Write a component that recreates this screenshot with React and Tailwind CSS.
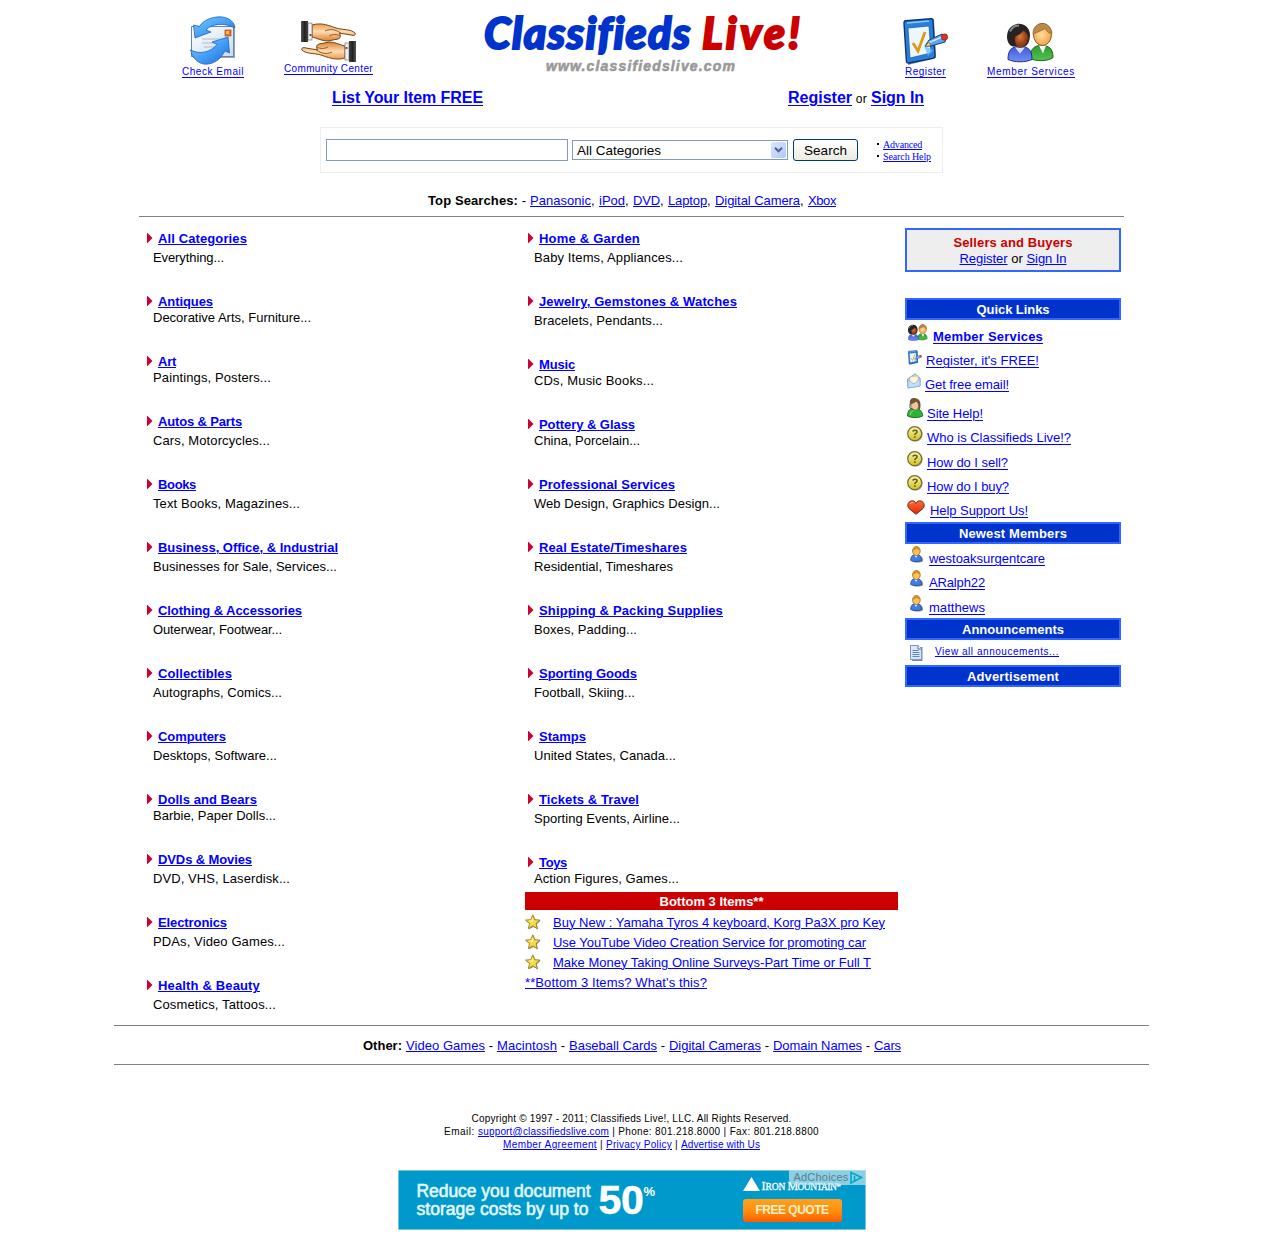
import { useLayoutEffect, useRef } from "react";

// Text set to a given width by adjusting its letter spacing.
function Fit({ w, children, flat, className = "" }) {
  const ref = useRef(null);
  useLayoutEffect(() => {
    const el = ref.current;
    el.style.letterSpacing = "0px";
    const natural = el.getBoundingClientRect().width;
    el.style.letterSpacing = `${(w - natural) / el.textContent.length}px`;
  }, [w, children]);
  return (
    <span ref={ref} className={`inline-block shrink-0 whitespace-pre ${flat ? "" : "-mb-px pt-px"} ${className}`}>
      {children}
    </span>
  );
}

function Link({ w, children, flat, className = "" }) {
  return (
    <a href="#" className="flex text-[#0000ff]">
      <Fit w={w} flat={flat} className={`underline decoration-1 ${className || "underline-offset-1"}`}>{children}</Fit>
    </a>
  );
}

const left = [
  ["All Categories", 89, "Everything...", 71, 0],
  ["Antiques", 55, "Decorative Arts, Furniture...", 158, 1],
  ["Art", 18, "Paintings, Posters...", 118, 1],
  ["Autos & Parts", 84, "Cars, Motorcycles...", 117, 0],
  ["Books", 38, "Text Books, Magazines...", 147, 0],
  ["Business, Office, & Industrial", 180, "Businesses for Sale, Services...", 184, 0],
  ["Clothing & Accessories", 144, "Outerwear, Footwear...", 129, 0],
  ["Collectibles", 74, "Autographs, Comics...", 129, 0],
  ["Computers", 68, "Desktops, Software...", 124, 0],
  ["Dolls and Bears", 99, "Barbie, Paper Dolls...", 123, 1],
  ["DVDs & Movies", 94, "DVD, VHS, Laserdisk...", 137, 0],
  ["Electronics", 69, "PDAs, Video Games...", 132, 0],
  ["Health & Beauty", 102, "Cosmetics, Tattoos...", 123, 0],
];

const right = [
  ["Home & Garden", 101, "Baby Items, Appliances...", 149, 0],
  ["Jewelry, Gemstones & Watches", 198, "Bracelets, Pendants...", 129, 0],
  ["Music", 36, "CDs, Music Books...", 120, 1],
  ["Pottery & Glass", 96, "China, Porcelain...", 106, 1],
  ["Professional Services", 136, "Web Design, Graphics Design...", 186, 0],
  ["Real Estate/Timeshares", 148, "Residential, Timeshares", 139, 0],
  ["Shipping & Packing Supplies", 184, "Boxes, Padding...", 103, 0],
  ["Sporting Goods", 98, "Football, Skiing...", 101, 0],
  ["Stamps", 47, "United States, Canada...", 142, 0],
  ["Tickets & Travel", 100, "Sporting Events, Airline...", 146, 0],
  ["Toys", 28, "Action Figures, Games...", 145, 1],
];

function Category({ item: [title, tw, sub, sw, tight] }) {
  return (
    <div className="pb-7 last:pb-0">
      <div className="flex h-4 items-center">
        <svg width="6" height="10" viewBox="0 0 6 10" className="mr-[5px]">
          <path d="M0 0h.5l5 5-5 5H0z" fill="#cc0033" />
        </svg>
        <Link w={tw} className="font-bold underline-offset-1">{title}</Link>
      </div>
      <div className={`flex h-4 pl-1.5 ${tight ? "" : "mt-[3px]"}`}>
        <Fit w={sw}>{sub}</Fit>
      </div>
    </div>
  );
}

function EmailIcon() {
  return (
    <svg width="46" height="50" viewBox="0 0 46 50">
      <defs>
        <linearGradient id="arrowBlue" x1="0" y1="0" x2="1" y2="1">
          <stop offset="0" stopColor="#7cc4ff" />
          <stop offset=".45" stopColor="#4ba6fb" />
          <stop offset="1" stopColor="#1a6cdc" />
        </linearGradient>
        <linearGradient id="paper" x1="0" y1="0" x2="1" y2="1">
          <stop offset="0" stopColor="#fff" />
          <stop offset="1" stopColor="#c9dcf4" />
        </linearGradient>
      </defs>
      <path d="M3 12h42v30H3z" fill="#555" opacity=".55" />
      <path d="M1.500 10.500h42v30h-42z" fill="url(#paper)" stroke="#6385b5" />
      <rect x="35" y="14" width="6" height="6" fill="#f07020" stroke="#a84a20" strokeWidth=".7" />
      <path d="M36 15h3v3h-3z" fill="#ffb050" />
      <path d="M12 23h18M12 27h16M14 31h12" stroke="#b3b8c2" strokeWidth="1.200" />
      <path d="M45 12C44 3 34 0 27 1 18 2 12 6 9.500 10.500L3.500 9 5 22 21 16l-5-2c5-6 18-8 29-2z" fill="url(#arrowBlue)" stroke="#2163b4" strokeWidth=".8" />
      <path d="M.5 34C4 46 12 49 18 48c8-1 13-6 17-13l4.500 2L38 21 22 26l5 2.500C21 36 10 39 .5 34z" fill="url(#arrowBlue)" stroke="#2163b4" strokeWidth=".8" />
    </svg>
  );
}

function Hand() {
  return (
    <g>
      <path d="M11 4c10-3 18 1 24 3 7 2 15 1 19 5 1 2-1 3-4 2l-12-2c2 2 2 5-1 6l-10 2c-7 0-11-3-16-4z" fill="url(#skin)" stroke="#7a4318" strokeWidth="1" />
      <path d="M24 10c6-3 12-1 17 3M28 15c4-2 8-2 11 0" fill="none" stroke="#9c5a24" strokeWidth="1" />
      <rect x="7" y="2" width="4" height="17" fill="#f2f2f2" stroke="#777" strokeWidth=".7" />
      <rect x="0" y="0" width="7" height="21" fill="url(#sleeve)" />
      <rect x="8.500" y="13" width="2" height="2" fill="#555" />
    </g>
  );
}

function HandsIcon() {
  return (
    <svg width="56" height="42" viewBox="0 0 56 42">
      <defs>
        <linearGradient id="skin" x1="0" y1="0" x2="0" y2="1">
          <stop offset="0" stopColor="#e89a50" />
          <stop offset=".45" stopColor="#ffdcb0" />
          <stop offset="1" stopColor="#d68136" />
        </linearGradient>
        <linearGradient id="sleeve">
          <stop offset="0" stopColor="#555" />
          <stop offset=".5" stopColor="#222" />
          <stop offset="1" stopColor="#444" />
        </linearGradient>
      </defs>
      <Hand />
      <g transform="rotate(180 27.500 20.500)"><Hand /></g>
    </svg>
  );
}

function RegisterIcon({ w, h }) {
  return (
    <svg width={w} height={h} viewBox="0 0 46 47" className="shrink-0">
      <path d="M4 5l27-4 2 39L5 47z" fill="#444" opacity=".6" />
      <path d="M1 5Q1 3 3 2.800L28 .7q2-.2 2 2L32 38q0 2-2 2.400L6 45q-2.500.5-2.600-2z" fill="#2a7fdd" stroke="#0a3474" strokeWidth="1.400" />
      <path d="M4 5l22-2" stroke="#8ccaff" strokeWidth="1.500" />
      <path d="M5 10l21-2 2 27-21 5z" fill="#eef6ff" stroke="#0e55ad" strokeWidth=".7" />
      <path d="M10 25l5 8 7-19" fill="none" stroke="#dc9c12" strokeWidth="2.800" />
      <path d="M21 28l4 10 6-6z" fill="#58bbf5" opacity=".7" />
      <path d="M22 28l4-6 13-6 4 4-1 4-14 4z" fill="#58a5ee" stroke="#17407c" />
      <path d="M25 25l14-6" stroke="#c6e6ff" strokeWidth="1.500" />
      <path d="M22 28l4-4 2 4z" fill="#f4cf82" stroke="#333" strokeWidth=".5" />
      <circle cx="41.500" cy="19" r="3.200" fill="#d43424" stroke="#8a1c18" strokeWidth=".6" />
    </svg>
  );
}

function PeopleIcon({ w, h }) {
  return (
    <svg width={w} height={h} viewBox="0 0 48 40" className="shrink-0">
      <defs>
        <radialGradient id="brownFace" cx=".4" cy=".35"><stop offset="0" stopColor="#d87a40" /><stop offset="1" stopColor="#8f3c12" /></radialGradient>
        <radialGradient id="lightFace" cx=".45" cy=".5"><stop offset="0" stopColor="#ffdc9c" /><stop offset="1" stopColor="#f0a850" /></radialGradient>
        <linearGradient id="blueCoat" x1="0" y1="0" x2="0" y2="1"><stop offset="0" stopColor="#4058d8" /><stop offset="1" stopColor="#7190f8" /></linearGradient>
        <linearGradient id="greenCoat" x1="0" y1="0" x2="0" y2="1"><stop offset="0" stopColor="#2c9a30" /><stop offset="1" stopColor="#52c44e" /></linearGradient>
      </defs>
      <path d="M23 36c0-9 4-13 11-13 8 0 12 3 12 12-5 4-17 4-23 1z" fill="url(#greenCoat)" stroke="#17641a" />
      <path d="M32 23l4 8 3-8z" fill="#fff" />
      <ellipse cx="35.500" cy="12" rx="9" ry="11" fill="url(#lightFace)" stroke="#8c5a1c" />
      <path d="M26 12C25-2 44-3 45 11c-3 0-5-2-7-5-4 3-8 3-12 6z" fill="#bb8a48" stroke="#7c5a2c" strokeWidth=".6" />
      <path d="M1 37c0-9 3-13 12-13s12 4 12 13c-6 3-18 3-24 0z" fill="url(#blueCoat)" stroke="#1c2f91" />
      <path d="M8 25l5 6 5-6z" fill="#d4e0ff" />
      <path d="M0 14C0-2 22-3 23 12c0 8-3 11-5 12H6c-4-1-6-5-6-10z" fill="#242424" />
      <path d="M8 14c4-2 6-3 8-6 4 2 6 5 5 9-1 5-4 8-8 8-4 0-6-5-5-11z" fill="url(#brownFace)" stroke="#512109" strokeWidth=".6" />
      <path d="M3 9C5 5 8 3 12 3" stroke="#888" strokeWidth="2" fill="none" />
    </svg>
  );
}

function MailSmall() {
  return (
    <svg width="14" height="16" viewBox="0 0 14 16">
      <path d="M.5 6L8 .8l5 4.200v8L1 15z" fill="#b9d9f4" stroke="#7aa6d0" />
      <path d="M3 4l8-1v7l-8 1z" fill="#fff6dc" stroke="#e5b570" strokeWidth=".7" />
      <path d="M1 7l6 4 6-5v7L1 15z" fill="#c3e0f8" stroke="#82b0d8" strokeWidth=".7" />
    </svg>
  );
}

function HelpPerson() {
  return (
    <svg width="16" height="20" viewBox="0 0 16 20">
      <path d="M.6 18c0-6 3-8 7-8s8 3 8 8c-4 2-11 2-15 0z" fill="#2fb335" stroke="#14751b" />
      <path d="M3 17c1-3 2-4 4-5" stroke="#91e889" fill="none" />
      <ellipse cx="8" cy="6.500" rx="4" ry="5.500" fill="#f2c595" stroke="#916039" strokeWidth=".6" />
      <path d="M3 7C2 0 6-.5 9 .5c5 1 5 6 4 11l-2-1c1-3 0-6-2-7-2 2-4 2-6 3.500z" fill="#715339" />
      <path d="M3 6v4l4 2" stroke="#555" fill="none" />
    </svg>
  );
}

function Question() {
  return (
    <svg width="16" height="16" viewBox="0 0 16 16">
      <defs><linearGradient id="gold" x1="0" y1="0" x2="0" y2="1"><stop offset="0" stopColor="#f8f4b8" /><stop offset="1" stopColor="#d3bd24" /></linearGradient></defs>
      <circle cx="8.400" cy="8.500" r="7.300" fill="#aaa" />
      <circle cx="7.700" cy="7.700" r="7" fill="url(#gold)" stroke="#77701d" strokeWidth="1.200" />
      <path d="M5.700 5.500C6 3.800 10 3.600 10 5.800 10 7.500 7.800 7.300 7.800 9" stroke="#665f0e" strokeWidth="1.500" fill="none" />
      <path d="M7 10.300h1.600v1.500H7z" fill="#665f0e" />
    </svg>
  );
}

function Heart() {
  return (
    <svg width="18" height="15" viewBox="0 0 18 15">
      <defs><linearGradient id="heartRed" x1="0" y1="0" x2="0" y2="1"><stop offset="0" stopColor="#ff6a38" /><stop offset="1" stopColor="#dc2a05" /></linearGradient></defs>
      <path d="M9 14.300L2 8.500C-1 5 2 .6 5.500.8 7.500 1 8.500 2 9 3.500 9.500 2 10.500 1 12.500.8 16 .6 19 5 16 8.500z" fill="url(#heartRed)" stroke="#7a2a14" />
      <path d="M3 4c.5-1.200 1.500-1.700 3-1.500" stroke="#ffc4a0" fill="none" />
    </svg>
  );
}

function UserIcon() {
  return (
    <svg width="13" height="17" viewBox="0 0 13 17">
      <path d="M2 15C2 10 4 9 7 9s6 1 6 6c-2 2-9 2-11 0z" fill="#888" />
      <path d="M.7 14.500C.7 10 3 8.500 6 8.500s5.500 1.500 5.500 6c-3 1.500-8 1.500-10.800 0z" fill="#3f7be8" stroke="#2149a0" strokeWidth=".8" />
      <path d="M4.500 9L6 12l1.500-3z" fill="#fff" />
      <ellipse cx="6.400" cy="5" rx="3.800" ry="4.500" fill="#fbc35c" stroke="#9a641c" strokeWidth=".8" />
      <path d="M2.600 5C2-.5 10-1.200 10.300 4 8 4 7 3 6 2.700 5.500 4 4 4 2.600 5z" fill="#d58d22" />
    </svg>
  );
}

function DocIcon() {
  return (
    <svg width="14" height="16" viewBox="0 0 14 16">
      <path d="M2 2h10.500v14H2z" fill="#889" />
      <path d="M.5.500h7.500l3.500 3.500v10.500H.5z" fill="#d9e6fb" stroke="#7f97c4" />
      <path d="M8 .5V4h3.500" fill="#fff" stroke="#4f70ab" />
      <path d="M2.500 5.500h6M2.500 7.500h7M2.500 9.500h7M2.500 11.500h7" stroke="#5f86cc" />
    </svg>
  );
}

function Star() {
  return (
    <svg width="16" height="16" viewBox="0 0 16 16" className="mr-3">
      <path d="M8.500 1.500l2 4.800 5 .5-3.700 3.600 1.200 5.200-4.500-2.700L4 15.500l1-5.200L1.300 7l5-.5z" fill="#8b9aa5" />
      <path d="M7.800.8l2 4.900 5.200.4-4 3.500 1.300 5-4.500-2.700-4.500 2.700 1.300-5-4-3.500 5.200-.4z" fill="#f8dc45" stroke="#987a1e" strokeWidth=".9" />
      <path d="M7.800 3l.2 5-5-1.200 3.500-.3z" fill="#fff6ae" />
    </svg>
  );
}

function Bar({ w, children }) {
  return (
    <div className="flex h-[22px] items-center justify-center border-2 border-[#3366ff] bg-[#0033cc] font-bold text-white">
      <Fit w={w}>{children}</Fit>
    </div>
  );
}

function SideRow({ h, pad, iconBox, icon, mb = "mb-[3px]", w, bold, children }) {
  return (
    <div className={`flex items-end ${h} ${pad}`}>
      <div className={`shrink-0 ${iconBox} ${mb}`}>{icon}</div>
      <Link w={w} className={bold ? "font-bold underline-offset-2" : "underline-offset-2"}>{children}</Link>
    </div>
  );
}

export default function App() {
  return (
    <div className="h-[1257px] w-[1263px] overflow-hidden bg-white font-['Liberation_Sans',Arial,sans-serif] text-[13px] leading-4 text-black">
      <header className="flex h-[82px] items-start pl-[182px] text-[10px] leading-3">
        <div className="flex w-[62px] flex-col items-center pt-4">
          <EmailIcon />
          <Link flat w={62} className="underline-offset-2">Check Email</Link>
        </div>
        <div className="ml-10 flex w-[89px] flex-col items-center pt-[21px]">
          <HandsIcon />
          <Link flat w={89} className="underline-offset-2">Community Center</Link>
        </div>
        <div className="ml-[111px] flex w-[319px] flex-col pt-2.5">
          <div className="flex justify-between font-['Lato',sans-serif] text-[43px] leading-[46px] font-black italic">
            <Fit flat w={207} className="text-[#0033cc] [-webkit-text-stroke:2px_#0033cc]">Classifieds</Fit>
            <Fit flat w={101} className="text-[#cc0000] [-webkit-text-stroke:2px_#cc0000]">Live!</Fit>
          </div>
          <div className="flex pl-[62px] text-[14px] leading-[18px] font-bold text-[#999] italic [-webkit-text-stroke:0.600px_#999]">
            <Fit w={190}>www.classifiedslive.com</Fit>
          </div>
        </div>
        <div className="ml-[100px] flex w-[45px] flex-col items-center pt-[18px]">
          <RegisterIcon w={46} h={47} />
          <div className="mt-px"><Link flat w={41} className="underline-offset-2">Register</Link></div>
        </div>
        <div className="ml-[39px] flex w-[88px] flex-col items-center pt-[22px]">
          <PeopleIcon w={48} h={41} />
          <div className="mt-[3px]"><Link flat w={88} className="underline-offset-2">Member Services</Link></div>
        </div>
      </header>

      <div className="flex h-[45px] items-start pt-[5px] pl-[332px] text-base leading-5">
        <Link w={151} className="font-bold underline-offset-2">List Your Item FREE</Link>
        <div className="ml-[305px] flex items-baseline">
          <Link w={64} className="font-bold underline-offset-2">Register</Link>
          <Fit w={19} className="text-xs"> or </Fit>
          <Link w={53} className="font-bold underline-offset-2">Sign In</Link>
        </div>
      </div>

      <div className="ml-[320px] flex h-[46px] w-[623px] items-center border border-[#eeeeee] pl-[5px]">
        <input className="h-[22px] w-[242px] border border-[#7f9db9] bg-white px-1 outline-none" />
        <div className="ml-1 flex h-5 w-[216px] items-center justify-between border border-[#7f9db9] pr-px pl-1">
          <Fit w={84} className="text-[13.500px]">All Categories</Fit>
          <div className="flex h-4 w-[15px] items-center justify-center rounded-[2px] bg-gradient-to-br from-[#dbe6ff] to-[#b0c8f6]">
            <svg width="9" height="6" viewBox="0 0 9 6"><path d="M1 .8l3.500 3.500L8 .8" fill="none" stroke="#4d6185" strokeWidth="2" /></svg>
          </div>
        </div>
        <button className="ml-[5px] flex h-[22px] w-[65px] items-center justify-center rounded-[3px] border border-[#003c74] bg-gradient-to-b from-white to-[#ebebe2]">
          <Fit w={43} className="text-[13.500px]">Search</Fit>
        </button>
        <div className="ml-[19px] flex flex-col font-['Liberation_Serif',serif] text-[10px] leading-3">
          <div className="flex items-center gap-1"><span className="h-0.5 w-0.5 bg-black" /><Link w={39}>Advanced</Link></div>
          <div className="flex items-center gap-1"><span className="h-0.5 w-0.5 bg-black" /><Link w={48}>Search Help</Link></div>
        </div>
      </div>

      <div className="mt-[19px] ml-[139px] flex h-[25px] w-[985px] border-b border-[#808080] pl-[289px]">
        <Fit w={90} className="font-bold">Top Searches:</Fit>
        <Fit w={12}> - </Fit>
        <Link w={61}>Panasonic</Link><Fit w={8}>, </Fit>
        <Link w={26}>iPod</Link><Fit w={8}>, </Fit>
        <Link w={27}>DVD</Link><Fit w={8}>, </Fit>
        <Link w={39}>Laptop</Link><Fit w={8}>, </Fit>
        <Link w={85}>Digital Camera</Link><Fit w={8}>, </Fit>
        <Link w={28}>Xbox</Link>
      </div>

      <main className="flex h-[808px] pt-[11px] pl-[147px]">
        <section className="w-[378px] pt-0.5">
          {left.map((item) => <Category key={item[0]} item={item} />)}
        </section>
        <section className="w-[373px] pt-0.5">
          <div className="pl-[3px]">
            {right.map((item) => <Category key={item[0]} item={item} />)}
          </div>
          <div className="mt-1.5 mb-0.5 flex h-[18px] items-center justify-center bg-[#cc0000] font-bold text-white">
            <Fit w={104}>Bottom 3 Items**</Fit>
          </div>
          <div className="flex h-5 items-center"><Star /><Link w={332}>Buy New : Yamaha Tyros 4 keyboard, Korg Pa3X pro Key</Link></div>
          <div className="flex h-5 items-center"><Star /><Link w={313}>Use YouTube Video Creation Service for promoting car</Link></div>
          <div className="flex h-5 items-center"><Star /><Link w={318}>Make Money Taking Online Surveys-Part Time or Full T</Link></div>
          <div className="flex h-5 items-center"><Link w={182}>**Bottom 3 Items? What's this?</Link></div>
        </section>

        <aside className="ml-[7px] w-[216px]">
          <div className="mb-[26px] flex h-11 flex-col items-center justify-center border-2 border-[#3366ff] bg-[#eeeeee]">
            <Fit w={119} className="font-bold text-[#cc0000]">Sellers and Buyers</Fit>
            <div className="flex"><Link w={48}>Register</Link><Fit w={19}> or </Fit><Link w={40}>Sign In</Link></div>
          </div>
          <Bar w={73}>Quick Links</Bar>
          <div className="pb-1">
            <SideRow h="h-6" pad="pl-[3px]" iconBox="w-[25px]" icon={<PeopleIcon w={20} h={17} />} w={110} bold>Member Services</SideRow>
            <SideRow h="h-6" pad="pl-[3px]" iconBox="w-[18px]" icon={<RegisterIcon w={14} h={15} />} w={113}>Register, it's FREE!</SideRow>
            <SideRow h="h-6" pad="pl-0.5" iconBox="w-[18px]" icon={<MailSmall />} w={84}>Get free email!</SideRow>
            <SideRow h="h-[29px]" pad="pl-0.5" iconBox="w-5" icon={<HelpPerson />} w={56}>Site Help!</SideRow>
            <SideRow h="h-6" pad="pl-0.5" iconBox="w-5" icon={<Question />} w={144}>Who is Classifieds Live!?</SideRow>
            <SideRow h="h-[25px]" pad="pl-0.5" iconBox="w-5" icon={<Question />} w={81}>How do I sell?</SideRow>
            <SideRow h="h-6" pad="pl-0.5" iconBox="w-5" icon={<Question />} w={82}>How do I buy?</SideRow>
            <SideRow h="h-6" pad="pl-0.5" iconBox="w-[23px]" icon={<Heart />} w={98}>Help Support Us!</SideRow>
          </div>
          <Bar w={108}>Newest Members</Bar>
          <div className="pb-[3px]">
            <SideRow h="h-[22px]" pad="pl-[5px]" iconBox="w-[19px]" icon={<UserIcon />} w={116}>westoaksurgentcare</SideRow>
            <SideRow h="h-6" pad="pl-[5px]" iconBox="w-[19px]" icon={<UserIcon />} w={56}>ARalph22</SideRow>
            <SideRow h="h-[25px]" pad="pl-[5px]" iconBox="w-[19px]" icon={<UserIcon />} w={56}>matthews</SideRow>
          </div>
          <Bar w={102}>Announcements</Bar>
          <div className="flex h-[25px] items-start pt-[5px] pl-[5px] text-[10px] leading-[13px]">
            <div className="w-[25px]"><DocIcon /></div>
            <Link flat w={124}>View all annoucements...</Link>
          </div>
          <Bar w={92}>Advertisement</Bar>
        </aside>
      </main>

      <div className="ml-[114px] flex h-10 w-[1035px] items-center border-y border-[#808080] pl-[249px]">
        <Fit w={39} className="font-bold">Other:</Fit>
        <Fit w={4}> </Fit>
        <Link w={79}>Video Games</Link><Fit w={12}> - </Fit>
        <Link w={60}>Macintosh</Link><Fit w={12}> - </Fit>
        <Link w={88}>Baseball Cards</Link><Fit w={12}> - </Fit>
        <Link w={92}>Digital Cameras</Link><Fit w={12}> - </Fit>
        <Link w={89}>Domain Names</Link><Fit w={12}> - </Fit>
        <Link w={27}>Cars</Link>
      </div>

      <footer className="flex flex-col items-center pt-[46px] text-[10px] leading-[13px]">
        <Fit w={320}>Copyright © 1997 - 2011; Classifieds Live!, LLC. All Rights Reserved.</Fit>
        <div className="flex">
          <Fit w={34}>Email: </Fit><Link w={131}>support@classifiedslive.com</Link>
          <Fit w={210}> | Phone: 801.218.8000 | Fax: 801.218.8800</Fit>
        </div>
        <div className="flex">
          <Link w={94}>Member Agreement</Link><Fit w={9}> | </Fit>
          <Link w={66}>Privacy Policy</Link><Fit w={9}> | </Fit>
          <Link w={79}>Advertise with Us</Link>
        </div>

        <div className="relative mt-5 flex h-[60px] w-[468px] border border-[#79c4dc] bg-[#0099cc] text-white">
          <div className="flex w-[182px] flex-col items-start pt-[11px] pl-[18px] text-[17.500px] leading-[18px] text-[#e4f7fd] [-webkit-text-stroke:0.600px_#e4f7fd]">
            <Fit flat w={174}>Reduce you document</Fit>
            <Fit flat w={172}>storage costs by up to</Fit>
          </div>
          <div className="ml-[18px] flex items-start pt-[9px] font-bold">
            <Fit flat w={45} className="text-[41px] leading-10 [-webkit-text-stroke:0.500px_#fff]">50</Fit>
            <Fit flat w={11} className="pt-1 text-[13px] leading-4">%</Fit>
          </div>
          <div className="ml-[88px] flex w-[99px] flex-col pt-1.5">
            <div className="flex h-[22px] items-start">
              <svg width="17" height="14" viewBox="0 0 17 14"><path d="M8.500 0L17 14H0z" fill="#fff" /></svg>
              <div className="flex items-baseline pt-1 pl-0.5 font-['Liberation_Serif',serif] text-[12px] leading-[11px] [-webkit-text-stroke:0.300px_#fff]">
                <Fit flat w={4}>I</Fit><Fit flat w={22} className="text-[9.500px]">RON </Fit><Fit flat w={10}>M</Fit><Fit flat w={43} className="text-[9.500px]">OUNTAIN*</Fit>
              </div>
            </div>
            <div className="flex h-[23px] items-center justify-center rounded-[3px] bg-gradient-to-b from-[#ffa21c] via-[#ff9010] to-[#ff5a00] text-[12px] font-bold text-[#fff0c8]">
              <Fit flat w={73}>FREE QUOTE</Fit>
            </div>
          </div>
          <div className="absolute -top-px -right-px flex h-[15px] w-[77px] items-center rounded-bl-md bg-[#b9e2ee]/75 pl-[5px] text-[11px] leading-[9px] text-[#5f7d88]">
            <Fit flat w={55}>AdChoices</Fit>
            <svg width="13" height="13" viewBox="0 0 13 13" className="ml-px"><path d="M1 1.500l10.500 5L1 12zM4.500 5v5" fill="none" stroke="#00a5c9" strokeWidth="1.600" /></svg>
          </div>
        </div>
      </footer>
    </div>
  );
}
